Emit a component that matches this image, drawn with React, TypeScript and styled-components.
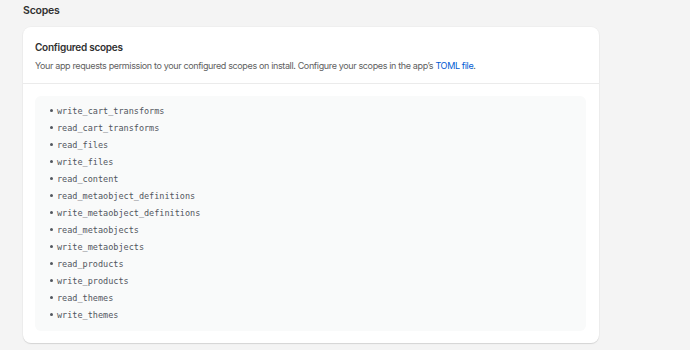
import React from "react";
import styled, { createGlobalStyle } from "styled-components";

const GlobalStyle = createGlobalStyle`
  html, body {
    margin: 0;
    padding: 0;
    background: #f4f4f4;
  }
  body {
    font-family: Inter, "Noto Sans", sans-serif;
    color: #303030;
    -webkit-font-smoothing: antialiased;
  }
`;

const Page = styled.div`
  width: 690px;
  height: 350px;
  padding: 4px 91px 0 23px;
  box-sizing: border-box;
  display: flex;
  flex-direction: column;
`;

const PageTitle = styled.h2`
  margin: 0;
  font-size: 10.5px;
  line-height: 14px;
  font-weight: 600;
  letter-spacing: -0.2px;
  color: #303030;
`;

const Card = styled.section`
  margin-top: 9px;
  background: #ffffff;
  border-radius: 8px;
  box-shadow: 0 1px 0 0 rgba(26, 26, 26, 0.07), 0 1px 2px rgba(0, 0, 0, 0.05),
    0 0 0 1px rgba(0, 0, 0, 0.02);
  display: flex;
  flex-direction: column;
`;

const CardHeader = styled.div`
  padding: 12px 12px 10px;
  border-bottom: 1px solid #ebebeb;
`;

const CardTitle = styled.h3`
  margin: 0;
  font-size: 10px;
  line-height: 16px;
  font-weight: 600;
  letter-spacing: -0.25px;
  color: #303030;
`;

const Description = styled.p`
  margin: 4px 0 0;
  font-size: 9px;
  line-height: 14px;
  letter-spacing: -0.36px;
  color: #616161;
`;

const Link = styled.a`
  color: #005bd3;
  text-decoration: none;
`;

const CardBody = styled.div`
  padding: 12px 13px 12px 12px;
`;

const CodeBlock = styled.div`
  background: #f9fafa;
  border-radius: 6px;
  padding: 6px 0 8px;
`;

const ScopeList = styled.ul`
  margin: 0;
  padding: 0 0 0 15px;
  list-style: none;
`;

const ScopeItem = styled.li`
  display: flex;
  align-items: center;
  height: 17px;
  font-family: "DejaVu Sans Mono", "Liberation Mono", monospace;
  font-size: 8.5px;
  color: #51565e;

  &::before {
    content: "";
    width: 3px;
    height: 3px;
    border-radius: 50%;
    background: #51565e;
    margin-right: 4px;
  }
`;

const scopes = [
  "write_cart_transforms",
  "read_cart_transforms",
  "read_files",
  "write_files",
  "read_content",
  "read_metaobject_definitions",
  "write_metaobject_definitions",
  "read_metaobjects",
  "write_metaobjects",
  "read_products",
  "write_products",
  "read_themes",
  "write_themes",
];

const App = () => {
  return (
    <>
      <GlobalStyle />
      <Page>
        <PageTitle>Scopes</PageTitle>
        <Card>
          <CardHeader>
            <CardTitle>Configured scopes</CardTitle>
            <Description>
              Your app requests permission to your configured scopes on install.
              Configure your scopes in the app’s <Link href="#">TOML file</Link>.
            </Description>
          </CardHeader>
          <CardBody>
            <CodeBlock>
              <ScopeList>
                {scopes.map((s) => (
                  <ScopeItem key={s}>{s}</ScopeItem>
                ))}
              </ScopeList>
            </CodeBlock>
          </CardBody>
        </Card>
      </Page>
    </>
  );
};

export default App;
